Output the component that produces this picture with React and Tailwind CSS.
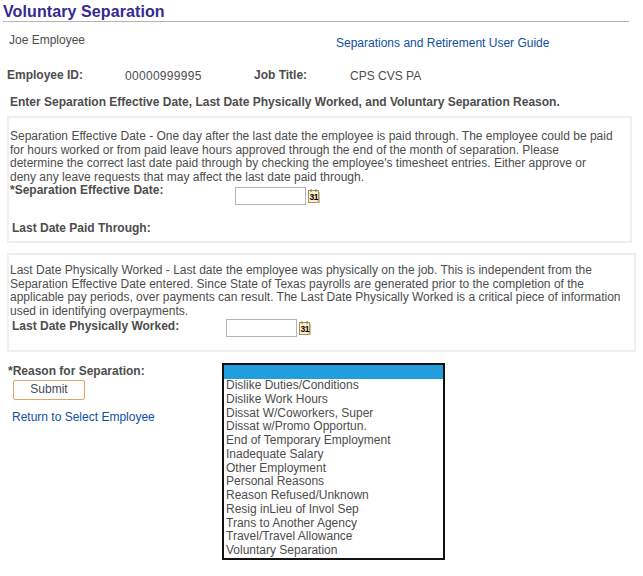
const reasons = [
  "",
  "Dislike Duties/Conditions",
  "Dislike Work Hours",
  "Dissat W/Coworkers, Super",
  "Dissat w/Promo Opportun.",
  "End of Temporary Employment",
  "Inadequate Salary",
  "Other Employment",
  "Personal Reasons",
  "Reason Refused/Unknown",
  "Resig inLieu of Invol Sep",
  "Trans to Another Agency",
  "Travel/Travel Allowance",
  "Voluntary Separation",
];

function CalendarIcon() {
  return (
    <svg width="12" height="14" viewBox="0 0 12 14" className="block">
      <rect x="0.5" y="1.5" width="10" height="12" fill="#fbeecb" stroke="#a8905c" />
      <path d="M8 13.5L10.5 10V13.5Z" fill="#d8c79c" />
      <rect x="11" y="3" width="1" height="11" fill="#d4c49b" />
      <path d="M3 0v3M8 0v3" stroke="#8a744a" />
      <text x="1.5" y="10.5" fontSize="8.5" fontWeight="700" letterSpacing="-0.6" fill="#000" fontFamily="Liberation Sans, sans-serif">31</text>
    </svg>
  );
}

function DateField({ className }) {
  return (
    <div className={"flex items-center gap-[2px] " + className}>
      <div className="w-[71px] h-[18px] bg-white border border-[#b5b5b5]"></div>
      <CalendarIcon />
    </div>
  );
}

export default function App() {
  return (
    <div className="w-[643px] h-[576px] bg-white overflow-hidden text-[12px] leading-[13.6px] text-[#4d4d4d] font-['Liberation_Sans',Arial,sans-serif]">
      <h1 className="ml-[3px] w-[626px] pt-[3px] h-[22px] border-b border-[#b3b3b3] text-[16px] leading-[18px] font-bold tracking-[0.1px] text-[#342a93]">
        Voluntary Separation
      </h1>

      <div className="flex pl-[9px] pt-[12px] h-[44px]">
        <div className="w-[327px]">Joe Employee</div>
        <a className="mt-[3px] text-[#0f4fa0]">Separations and Retirement User Guide</a>
      </div>

      <div className="flex pl-[7px] h-[30px] pt-[3px]">
        <div className="w-[118px] font-bold">Employee ID:</div>
        <div className="w-[129px] pt-[1px] tracking-[0.3px]">00000999995</div>
        <div className="w-[96px] font-bold">Job Title:</div>
        <div className="pt-[1px]">CPS CVS PA</div>
      </div>

      <div className="pl-[10px] font-bold h-[20px]">
        Enter Separation Effective Date, Last Date Physically Worked, and Voluntary Separation Reason.
      </div>

      <section className="ml-[7px] w-[625px] h-[127px] border-2 border-[#efefef] pl-[1px] pt-[12px]">
        <p className="w-[605px]">
          Separation Effective Date - One day after the last date the employee is paid through. The employee could be paid for hours worked or from paid leave hours approved through the end of the month of separation. Please determine the correct last date paid through by checking the employee's timesheet entries. Either approve or deny any leave requests that may affect the last date paid through.
        </p>
        <div className="flex">
          <div className="w-[225px] font-bold">*Separation Effective Date:</div>
          <DateField className="mt-[3px]" />
        </div>
        <div className="mt-[17px] ml-[2px] font-bold">Last Date Paid Through:</div>
      </section>

      <section className="ml-[7px] mt-[10px] w-[629px] h-[99px] border-2 border-[#efefef] pl-[1px] pt-[9px]">
        <p className="w-[620px]">
          Last Date Physically Worked - Last date the employee was physically on the job. This is independent from the Separation Effective Date entered. Since State of Texas payrolls are generated prior to the completion of the applicable pay periods, over payments can result. The Last Date Physically Worked is a critical piece of information used in identifying overpayments.
        </p>
        <div className="flex">
          <div className="w-[216px] pl-[2px] pt-[2px] font-bold">Last Date Physically Worked:</div>
          <DateField className="mt-[1px]" />
        </div>
      </section>

      <div className="flex pl-[8px] pt-[11px]">
        <div className="w-[214px]">
          <div className="pt-[2px] font-bold">*Reason for Separation:</div>
          <button className="block ml-[5px] mt-[1px] w-[72px] h-[20px] bg-white border border-[#e0a56c] rounded-[2px] text-[#3f4a5a]">
            Submit
          </button>
          <a className="block ml-[4px] mt-[11px] text-[#0f4fa0]">Return to Select Employee</a>
        </div>
        <ul className="w-[223px] h-[197px] border-[2px] border-[#111111] bg-white">
          {reasons.map((r, i) => (
            <li
              key={i}
              className={
                i === 0
                  ? "h-[14px] bg-[#219edb]"
                  : "h-[13.75px] pl-[2px] leading-[13.75px]"
              }
            >
              {r}
            </li>
          ))}
        </ul>
      </div>
    </div>
  );
}
